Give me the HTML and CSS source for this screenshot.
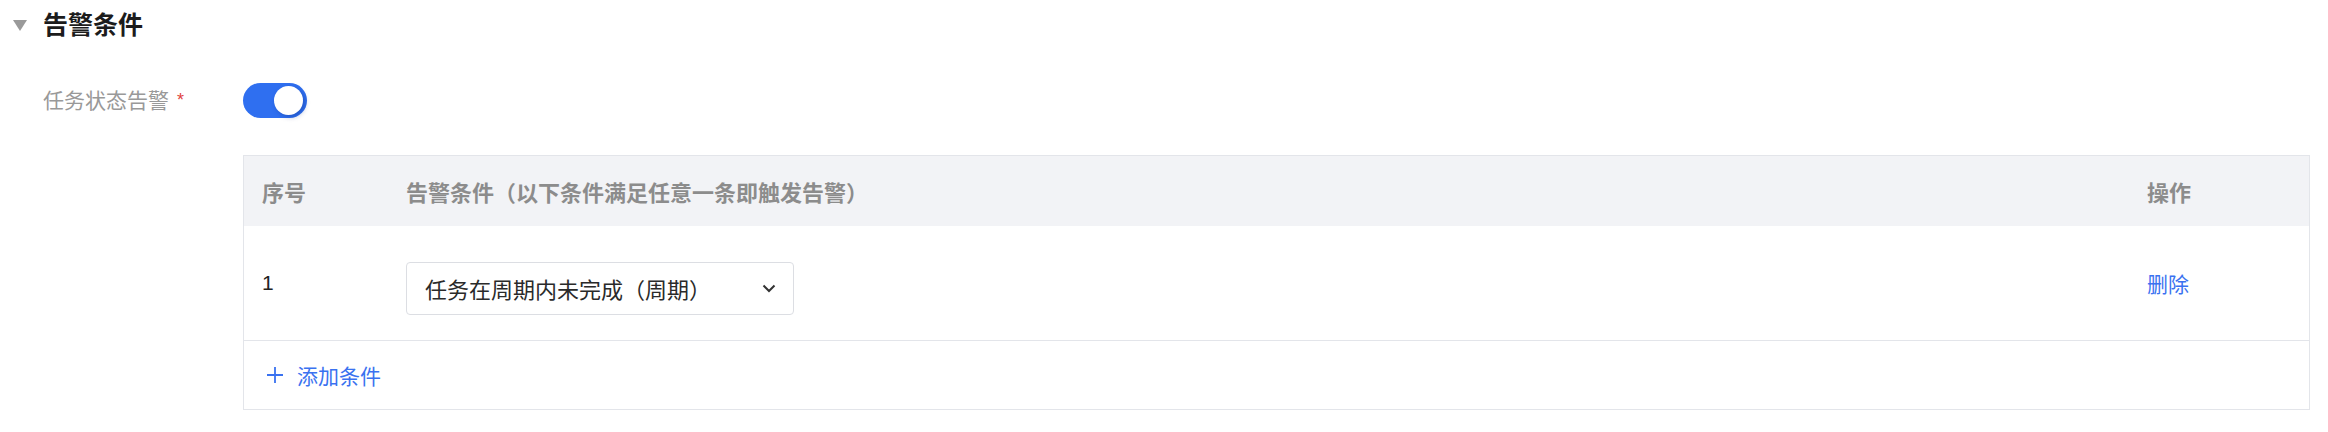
FILE: index.html
```html
<!DOCTYPE html>
<html lang="zh-CN">
<head>
    <meta charset="UTF-8">
    <title>告警条件</title>
    <link rel="stylesheet" href="styles.css">
</head>
<body>
<div class="section">
    <div class="section-head">
        <span class="caret"></span>
        <h2>告警条件</h2>
    </div>
    <div class="form-row switch-row">
        <label class="form-label">任务状态告警<span class="req">*</span></label>
        <div class="form-control">
            <span class="switch is-on"><span class="knob"></span></span>
        </div>
    </div>
    <div class="form-row table-row">
        <div class="form-label"></div>
        <div class="form-control">
            <div class="cond-table">
                <div class="cond-head">
                    <div class="cell">序号</div>
                    <div class="cell">告警条件（以下条件满足任意一条即触发告警）</div>
                    <div class="cell">操作</div>
                </div>
                <div class="cond-row">
                    <div class="cell">1</div>
                    <div class="cell">
                        <div class="select">
                            <span>任务在周期内未完成（周期）</span>
                            <svg width="14" height="9" viewBox="0 0 14 9"><path d="M1.5 1.5 L7 7 L12.5 1.5" fill="none" stroke="#333" stroke-width="2"/></svg>
                        </div>
                    </div>
                    <div class="cell"><a class="link" href="#">删除</a></div>
                </div>
                <div class="cond-add">
                    <a class="link add-link" href="#">
                        <svg width="18" height="18" viewBox="0 0 18 18"><path d="M9 1 V17 M1 9 H17" stroke="currentColor" stroke-width="1.8"/></svg>
                        添加条件
                    </a>
                </div>
            </div>
        </div>
    </div>
</div>
</body>
</html>
```

FILE: styles.css
```css
* {
    margin: 0;
    padding: 0;
    box-sizing: border-box;
}
body {
    font-family: "Liberation Sans", "Noto Sans CJK SC", sans-serif;
    font-size: 21px;
    color: #222;
    background: #fff;
    text-spacing-trim: space-all;
}
.section {
    padding: 0 18px 0 13px;
}
.section-head {
    height: 50px;
    display: flex;
    align-items: center;
}
.caret {
    width: 0;
    height: 0;
    border-left: 7px solid transparent;
    border-right: 7px solid transparent;
    border-top: 11px solid #9a9a9a;
    margin-right: 16px;
}
.section-head h2 {
    font-size: 25px;
    font-weight: 700;
    color: #1c1c1c;
    line-height: 30px;
}
.form-row {
    display: flex;
    align-items: center;
}
.switch-row {
    margin-top: 33px;
}
.table-row {
    margin-top: 37px;
}
.form-label {
    width: 230px;
    flex-shrink: 0;
    padding-left: 30px;
    color: #999;
    line-height: 30px;
}
.req {
    color: #e0443e;
    font-size: 18px;
    margin-left: 8px;
    vertical-align: 2px;
}
.form-control {
    flex-grow: 1;
}
.switch {
    display: block;
    position: relative;
    width: 64px;
    height: 35px;
    border-radius: 18px;
    background: #2f6ff0;
}
.switch .knob {
    position: absolute;
    top: 3px;
    right: 4px;
    width: 29px;
    height: 29px;
    border-radius: 50%;
    background: #fff;
    box-shadow: 2px 2px 5px rgba(10, 40, 120, 0.35);
}
.cond-table {
    border: 1px solid #e3e5ea;
}
.cond-head, .cond-row {
    display: grid;
    grid-template-columns: 144px 1fr 180px;
    align-items: center;
}
.cell {
    padding: 0 18px;
}
.cond-head {
    height: 70px;
    background: #f2f3f6;
    color: #8c8c8c;
    font-size: 22px;
    font-weight: 700;
}
.cond-row {
    height: 115px;
    border-bottom: 1px solid #e3e5ea;
}
.select {
    width: 388px;
    height: 53px;
    margin-top: 10px;
    border: 1px solid #dcdee3;
    border-radius: 4px;
    display: flex;
    align-items: center;
    justify-content: space-between;
    padding: 0 17px 0 18px;
    font-size: 22px;
    color: #2a2a2a;
}
.link {
    color: #3a72f0;
    text-decoration: none;
}
.cond-add {
    height: 68px;
    display: flex;
    align-items: center;
    padding-left: 22px;
}
.add-link {
    display: flex;
    align-items: center;
}
.add-link svg {
    margin-right: 13px;
}
```
